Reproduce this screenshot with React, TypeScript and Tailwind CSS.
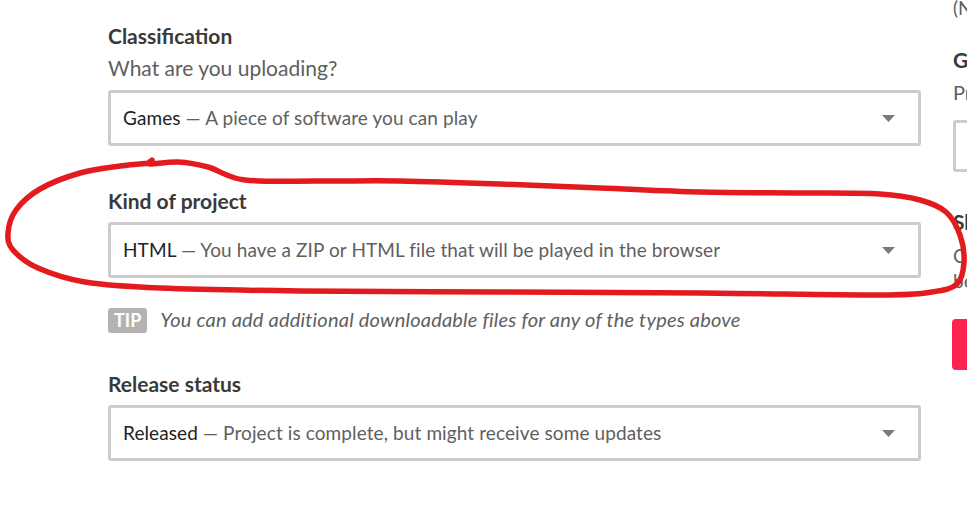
import React from "react";

type Pt = [number, number];

function smoothPath(pts: Pt[]): string {
  let d = `M ${pts[0][0]} ${pts[0][1]}`;
  for (let i = 0; i < pts.length - 1; i++) {
    const p0 = pts[i - 1] || pts[i];
    const p1 = pts[i];
    const p2 = pts[i + 1];
    const p3 = pts[i + 2] || p2;
    const c1x = p1[0] + (p2[0] - p0[0]) / 6;
    const c1y = p1[1] + (p2[1] - p0[1]) / 6;
    const c2x = p2[0] - (p3[0] - p1[0]) / 6;
    const c2y = p2[1] - (p3[1] - p1[1]) / 6;
    d += ` C ${c1x.toFixed(1)} ${c1y.toFixed(1)} ${c2x.toFixed(1)} ${c2y.toFixed(1)} ${p2[0]} ${p2[1]}`;
  }
  return d;
}

const loop: Pt[] = [
  [152, 160],
  [150, 164],
  [178, 162],
  [208, 167],
  [245, 180],
  [320, 181],
  [400, 181],
  [500, 184],
  [600, 188],
  [700, 192],
  [800, 193],
  [880, 194],
  [920, 200],
  [946, 212],
  [960, 235],
  [964, 262],
  [957, 284],
  [932, 292],
  [880, 295],
  [700, 293],
  [500, 292],
  [300, 291],
  [160, 288],
  [85, 282],
  [38, 268],
  [13, 250],
  [8, 233],
  [16, 210],
  [40, 189],
  [80, 173],
  [120, 166],
  [150, 163],
];

function Arrow() {
  return (
    <svg width="13" height="7" viewBox="0 0 13 7" className="shrink-0">
      <path d="M0 0 L13 0 L6.5 7 Z" fill="#7a7a7a" />
    </svg>
  );
}

function Select({ main, desc }: { main: string; desc: string }) {
  return (
    <div className="h-[56px] w-full border-[3px] border-[#cccccc] rounded-[3px] bg-white flex items-center pl-[12px] pr-[23px]">
      <div className="flex-1 text-[19px] leading-[24px] tracking-[0.1px] whitespace-nowrap">
        <span className="text-[#222222]">{main}</span>
        <span className="text-[#606060]"> — {desc}</span>
      </div>
      <Arrow />
    </div>
  );
}

function Label({ children }: { children: React.ReactNode }) {
  return (
    <div className="text-[21px] leading-[24px] font-bold text-[#3a3a3a]">{children}</div>
  );
}

export default function App() {
  return (
    <div
      className="relative w-[967px] h-[517px] overflow-hidden bg-white"
      style={{ fontFamily: "Lato, 'Open Sans', sans-serif" }}
    >
      <div className="flex pl-[108px]">
        <div className="w-[813px] shrink-0 pt-[24px]">
          <Label>Classification</Label>
          <div className="mt-[8px] text-[21px] leading-[24px] text-[#606060]">
            What are you uploading?
          </div>
          <div className="mt-[10px]">
            <Select main="Games" desc="A piece of software you can play" />
          </div>

          <div className="mt-[43px]">
            <Label>Kind of project</Label>
          </div>
          <div className="mt-[9px]">
            <Select
              main="HTML"
              desc="You have a ZIP or HTML file that will be played in the browser"
            />
          </div>

          <div className="mt-[30px] flex items-center gap-[13px]">
            <span className="h-[25px] px-[6px] rounded-[3px] bg-[#b3b3b3] text-white font-bold text-[18px] leading-[25px]">
              TIP
            </span>
            <span className="italic text-[20px] leading-[25px] tracking-[0.2px] text-[#606060] -mt-[2px]">
              You can add additional downloadable files for any of the types above
            </span>
          </div>

          <div className="mt-[39px]">
            <Label>Release status</Label>
          </div>
          <div className="mt-[9px]">
            <Select
              main="Released"
              desc="Project is complete, but might receive some updates"
            />
          </div>
        </div>

        <div className="ml-[32px] w-[320px] shrink-0 whitespace-nowrap">
          <div className="-mt-[4px] text-[19px] leading-[24px] text-[#606060]">
            (Not required)
          </div>
          <div className="mt-[28px]">
            <Label>Genre</Label>
          </div>
          <div className="mt-[8px] text-[20px] leading-[24px] text-[#606060]">
            Primary category of your project
          </div>
          <div className="mt-[16px] h-[52px] border-[3px] border-[#cccccc] rounded-[3px]" />
          <div className="mt-[38px]">
            <Label>Short description or tagline</Label>
          </div>
          <div className="mt-[9px] text-[19px] leading-[25px] text-[#606060]">
            <div>Classification shown</div>
            <div>below the title</div>
          </div>
          <div className="mt-[26px] -ml-[1px] h-[51px] w-[160px] rounded-[4px] bg-[#fb2350]" />
        </div>
      </div>

      <svg
        className="absolute inset-0 pointer-events-none"
        width="967"
        height="517"
        viewBox="0 0 967 517"
      >
        <path
          d={smoothPath(loop)}
          fill="none"
          stroke="#e31b1f"
          strokeWidth="5.5"
          strokeLinecap="round"
          strokeLinejoin="round"
        />
      </svg>
    </div>
  );
}
